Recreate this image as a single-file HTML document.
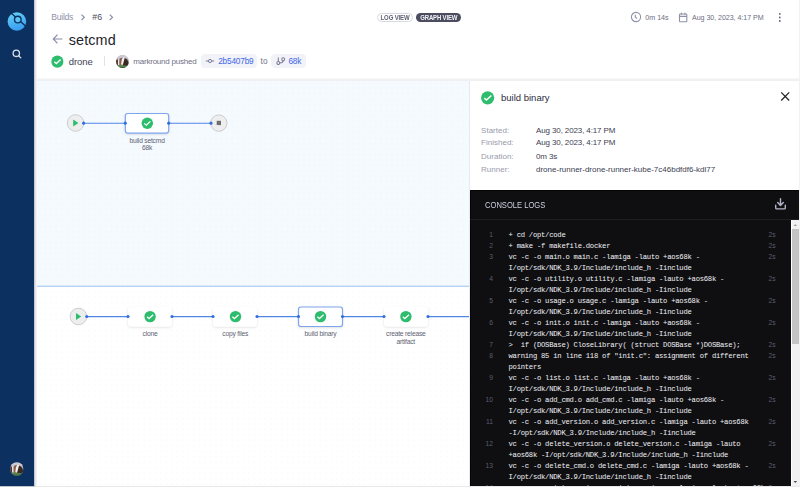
<!DOCTYPE html>
<html><head><meta charset="utf-8">
<style>
*{margin:0;padding:0;box-sizing:border-box}
html,body{width:800px;height:487px;overflow:hidden;background:#fff;font-family:"Liberation Sans",sans-serif}
.a{position:absolute}
.t{position:absolute;line-height:1;white-space:pre}
.m{font-family:"Liberation Mono",monospace}
.r{position:relative;white-space:pre}
.n{position:absolute;top:-0.8px;right:298px;font-size:6.7px;letter-spacing:0;color:#5b5e6b;font-family:"Liberation Sans",sans-serif}
.x{display:block;margin-left:38.5px}
.d{position:absolute;right:15.5px;top:-0.8px;font-size:6.7px;letter-spacing:0;color:#5b5e6b;font-family:"Liberation Sans",sans-serif}
</style></head><body>
<!-- right page strip -->
<div class="a" style="left:798.5px;top:0;width:2px;height:487px;background:#f2f2f2"></div>
<!-- sidebar -->
<div class="a" style="left:0;top:0;width:34px;height:487px;background:#0c305f"></div>
<div class="a" style="z-index:5;left:34px;top:0;width:3px;height:487px;background:linear-gradient(to right,#c6c9d0 0,#c6c9d0 1px,#e4e5e8 1px,#e4e5e8 2px,#f1f2f4 2px,#f1f2f4 3px)"></div>
<svg class="a" style="left:0;top:0" width="35" height="487" viewBox="0 0 35 487">
  <defs>
    <linearGradient id="lg" x1="0" y1="0" x2="0.3" y2="1">
      <stop offset="0" stop-color="#68d4f6"/><stop offset="1" stop-color="#3a9ff0"/>
    </linearGradient>
  </defs>
  <circle cx="16.9" cy="21.5" r="9.3" fill="url(#lg)"/>
  <line x1="10.5" y1="12.5" x2="25.5" y2="26" stroke="#0c305f" stroke-width="1.4"/>
  <circle cx="17.8" cy="19.6" r="3.3" fill="#5cc3f3" stroke="#0c305f" stroke-width="1.4"/>
  <circle cx="16.3" cy="53.3" r="3.2" fill="none" stroke="#dcdfe9" stroke-width="1.3"/>
  <line x1="18.6" y1="55.7" x2="20.8" y2="57.9" stroke="#dcdfe9" stroke-width="1.3" stroke-linecap="round"/>
  <defs><clipPath id="av1"><circle cx="6.5" cy="6.5" r="6.5"/></clipPath></defs>
  <g transform="translate(10.1 462.3) scale(1.03)"><g clip-path="url(#av1)"><use href="#avg"/></g></g>
</svg>

<!-- header -->
<div class="a" style="left:35px;top:78px;width:764px;height:1px;background:#f8f8fa"></div><div class="a" style="left:35px;top:79px;width:764px;height:2px;background:#f0f0f3"></div>
<div class="t" style="left:51.3px;top:12.7px;font-size:8.6px;letter-spacing:-0.28px;color:#9293aa">Builds</div>
<svg class="a" style="left:78px;top:13px" width="40" height="10" viewBox="0 0 40 10">
  <path d="M3.5 1.6 L6.3 4.3 L3.5 7.0" fill="none" stroke="#8a8ca4" stroke-width="1.15"/>
  <path d="M31.7 1.6 L34.5 4.3 L31.7 7.0" fill="none" stroke="#8a8ca4" stroke-width="1.15"/>
</svg>
<div class="t" style="left:92.3px;top:13.3px;font-size:8.8px;color:#4c4d61">#6</div>
<svg class="a" style="left:50.6px;top:32.2px" width="14" height="14" viewBox="0 0 14 14">
  <path d="M2.5 7 H11.4 M6.5 2.6 L2.3 7 L6.5 11.4" fill="none" stroke="#8a8ca8" stroke-width="1.15"/>
</svg>
<div class="t" style="left:68.8px;top:32.6px;font-size:14.4px;letter-spacing:0.1px;color:#1f1f2b">setcmd</div>

<svg class="a" style="left:50px;top:54px" width="15" height="15" viewBox="0 0 15 15">
  <circle cx="7.35" cy="7.65" r="6.05" fill="#2dbd6c"/>
  <path d="M4.3 7.65 L6.4 9.5 L10.6 5.5" fill="none" stroke="#fff" stroke-width="1.35"/>
</svg>
<div class="t" style="left:68.8px;top:57.4px;font-size:9.5px;letter-spacing:-0.1px;color:#3e3f54">drone</div>
<div class="a" style="left:104.2px;top:55.6px;width:1px;height:10.5px;background:#e2e2ea"></div>
<svg class="a" style="left:115.9px;top:54.8px" width="13" height="13" viewBox="0 0 13 13">
  <defs><clipPath id="av2"><circle cx="6.5" cy="6.5" r="6.5"/></clipPath>
  <g id="avg">
    <rect x="0" y="0" width="13" height="13" fill="#b7b2bc"/>
    <rect x="0" y="0" width="13" height="3.2" fill="#cdc9d2"/>
    <path d="M0 5 Q1 4 2 4.5 L2 10.5 L0 10.5Z" fill="#4e3428"/>
    <path d="M1.9 3.8 L3.5 4 L3.5 10 L1.9 10Z" fill="#e6e3e4"/>
    <path d="M3.4 4.2 Q4.8 2.6 6.8 2.4 L5.6 10.2 L3.4 10.2Z" fill="#8a5e4a"/>
    <path d="M6.8 2.3 Q8.3 2.4 8.8 3.2 L7 9.6 L5 9.6 Q5.3 5 6.8 2.3Z" fill="#f3f1f1"/>
    <path d="M8.7 3 Q11.6 3.8 12.6 7.2 L13 11 L6.6 11 L7 9.5Z" fill="#3a2a22"/>
    <path d="M0 10 L7 10.2 L13 11 L13 13 L0 13Z" fill="#55834a"/>
    <path d="M0 12 L13 12 L13 13 L0 13Z" fill="#3a5e31"/>
  </g></defs>
  <g clip-path="url(#av2)"><use href="#avg"/></g>
</svg>
<div class="t" style="left:133.3px;top:57.8px;font-size:8px;letter-spacing:-0.22px;color:#6f7085">markround pushed</div>

<div class="a" style="left:200.5px;top:54.2px;width:56.7px;height:14.1px;background:#f2f3f9;border-radius:4px"></div>
<svg class="a" style="left:204px;top:56px" width="12" height="10" viewBox="0 0 12 10">
  <circle cx="6" cy="5" r="1.6" fill="none" stroke="#7b7d95" stroke-width="1"/>
  <path d="M1.8 5 H4.4 M7.6 5 H10.2" stroke="#7b7d95" stroke-width="1"/>
</svg>
<div class="t" style="left:218.2px;top:57.2px;font-size:8.3px;letter-spacing:-0.2px;color:#3f66e4">2b5407b9</div>
<div class="t" style="left:260.6px;top:57.2px;font-size:8.3px;color:#727388">to</div>
<div class="a" style="left:271.2px;top:54.2px;width:34.4px;height:14.1px;background:#f2f3f9;border-radius:4px"></div>
<svg class="a" style="left:275px;top:55px" width="12" height="12" viewBox="0 0 12 12">
  <circle cx="3.3" cy="8" r="1.45" fill="none" stroke="#7b7d95" stroke-width="1.05"/>
  <circle cx="8.2" cy="4.25" r="1.45" fill="none" stroke="#7b7d95" stroke-width="1.05"/>
  <path d="M3.3 2.5 V6.5 M8.2 5.7 Q8.2 7.6 4.7 8" fill="none" stroke="#7b7d95" stroke-width="1.05"/>
</svg>
<div class="t" style="left:288.4px;top:57.2px;font-size:8.3px;letter-spacing:-0.2px;color:#3f66e4">68k</div>

<!-- toggle -->
<div class="a" style="left:376.9px;top:12.6px;width:36.5px;height:9.2px;border:0.8px solid #d9d9e1;border-radius:5px"></div>
<div class="t" style="left:380.6px;top:13.7px;font-size:6px;letter-spacing:-0.15px;font-weight:700;transform:scaleY(1.2);transform-origin:0 0;color:#5c5d70">LOG VIEW</div>
<div class="a" style="left:416px;top:12.6px;width:44.9px;height:9.2px;background:#4b4c60;border-radius:5px"></div>
<div class="t" style="left:420.2px;top:13.7px;font-size:6px;letter-spacing:-0.15px;font-weight:700;transform:scaleY(1.2);transform-origin:0 0;color:#f4f4f8">GRAPH VIEW</div>

<!-- right header -->
<svg class="a" style="left:629px;top:10px" width="14" height="14" viewBox="0 0 14 14">
  <circle cx="7" cy="7" r="4.6" fill="none" stroke="#8f91aa" stroke-width="1.1"/>
  <path d="M6.3 4.8 L6.3 6.9 L8 8.6" fill="none" stroke="#8f91aa" stroke-width="1.1"/>
</svg>
<div class="t" style="left:645.3px;top:14.1px;font-size:7.2px;letter-spacing:-0.05px;color:#6d6e82">0m 14s</div>
<svg class="a" style="left:677px;top:11px" width="12" height="13" viewBox="0 0 12 13">
  <rect x="2.5" y="3" width="7.3" height="7.8" rx="0.8" fill="none" stroke="#8f91aa" stroke-width="1.1"/>
  <path d="M2.5 5.4 H9.8 M4.4 1.8 V3.8 M7.9 1.8 V3.8" fill="none" stroke="#8f91aa" stroke-width="1.1"/>
</svg>
<div class="t" style="left:692px;top:14.6px;font-size:7.1px;letter-spacing:-0.05px;color:#6d6e82">Aug 30, 2023, 4:17 PM</div>
<svg class="a" style="left:776px;top:11px" width="8" height="13" viewBox="0 0 8 13">
  <circle cx="3.8" cy="2.9" r="0.95" fill="#66677b"/>
  <circle cx="3.8" cy="6.45" r="0.95" fill="#66677b"/>
  <circle cx="3.8" cy="10" r="0.95" fill="#66677b"/>
</svg>

<!-- graph area -->
<svg class="a" style="left:35px;top:81px" width="435" height="406" viewBox="35 81 435 406">
  <defs>
    <pattern id="dots" x="1.4" y="0.3" width="5.5" height="5.5" patternUnits="userSpaceOnUse">
      <circle cx="0" cy="0" r="0.45" fill="#e0e5ec"/>
      <circle cx="5.5" cy="0" r="0.45" fill="#e0e5ec"/>
      <circle cx="0" cy="5.5" r="0.45" fill="#e0e5ec"/>
      <circle cx="5.5" cy="5.5" r="0.45" fill="#e0e5ec"/>
    </pattern>
    <filter id="sh" x="-20%" y="-30%" width="140%" height="170%">
      <feDropShadow dx="0" dy="0.9" stdDeviation="1.3" flood-color="#000" flood-opacity="0.13"/>
    </filter>
    <g id="chk">
      <circle cx="0" cy="0" r="5.7" fill="#2dbd6c"/>
      <path d="M-3.1 0.15 L-1.05 1.95 L3.1 -1.85" fill="none" stroke="#fff" stroke-width="1.25"/>
    </g>
    <g id="play">
      <circle cx="0" cy="0" r="8.3" fill="#eeeeee" stroke="#cdcdcd" stroke-width="1"/>
      <path d="M-2.4 -3.4 L2.8 0 L-2.4 3.4Z" fill="#2dbd6c"/>
    </g>
  </defs>
  <rect x="35" y="81" width="435" height="205" fill="#f5faff"/>
  <rect x="35" y="81" width="435" height="205" fill="url(#dots)"/>
  <rect x="35" y="287" width="435" height="200" fill="#ffffff"/>
  <rect x="35" y="287" width="435" height="200" fill="url(#dots)"/>
  <rect x="35" y="285.6" width="435" height="1.4" fill="#b5d3f6"/>

  <!-- upper pipeline -->
  <use href="#play" x="75.6" y="123"/>
  <circle cx="218.8" cy="123.1" r="8.2" fill="#eeeeee" stroke="#cdcdcd" stroke-width="1"/>
  <rect x="216.7" y="120.8" width="4.3" height="4.3" fill="#6e6e6e"/>
  <path d="M84 123.2 H125.2 M168.7 123.2 H210.5" stroke="#4f86e6" stroke-width="1.1"/>
  <circle cx="83.6" cy="123.15" r="1.55" fill="#2f6fe0"/>
  <rect x="125.3" y="113.5" width="43.4" height="19.6" rx="2.5" fill="#fff" stroke="#7ea6ee" stroke-width="1.2" filter="url(#sh)"/>
  <circle cx="125.3" cy="123.15" r="1.55" fill="#2f6fe0"/>
  <circle cx="168.7" cy="123.15" r="1.55" fill="#2f6fe0"/>
  <circle cx="211" cy="123.15" r="1.55" fill="#2f6fe0"/>
  <use href="#chk" x="147.3" y="123.25"/>
  <text x="147.1" y="142.7" font-size="6.7" letter-spacing="-0.2" fill="#5e5f73" text-anchor="middle" font-family="Liberation Sans">build setcmd</text>
  <text x="147.1" y="150.4" font-size="6.7" letter-spacing="-0.2" fill="#5e5f73" text-anchor="middle" font-family="Liberation Sans">68k</text>

  <!-- lower pipeline -->
  <use href="#play" x="78.4" y="316.5"/>
  <path d="M86.8 316.6 H128 M172 316.6 H213 M257 316.6 H298.3 M342.7 316.6 H383.8 M428.2 316.6 H470" stroke="#4f86e6" stroke-width="1.1"/>
  <rect x="128" y="307" width="44" height="19.5" rx="3" fill="#fff" filter="url(#sh)"/>
  <rect x="213" y="307" width="44" height="19.5" rx="3" fill="#fff" filter="url(#sh)"/>
  <rect x="298.5" y="307" width="44" height="19.5" rx="2.5" fill="#fff" stroke="#7ea6ee" stroke-width="1.2" filter="url(#sh)"/>
  <rect x="384" y="307" width="44" height="19.5" rx="3" fill="#fff" filter="url(#sh)"/>
  <g fill="#2f6fe0">
    <circle cx="86.8" cy="316.55" r="1.55"/><circle cx="128" cy="316.55" r="1.55"/>
    <circle cx="172" cy="316.55" r="1.55"/><circle cx="213" cy="316.55" r="1.55"/>
    <circle cx="257" cy="316.55" r="1.55"/><circle cx="298.5" cy="316.55" r="1.55"/>
    <circle cx="342.5" cy="316.55" r="1.55"/><circle cx="384" cy="316.55" r="1.55"/>
    <circle cx="428" cy="316.55" r="1.55"/>
  </g>
  <use href="#chk" x="150.1" y="316.6"/>
  <use href="#chk" x="235.5" y="316.6"/>
  <use href="#chk" x="320.5" y="316.6"/>
  <use href="#chk" x="405.9" y="316.6"/>
  <g font-size="6.7" letter-spacing="-0.2" fill="#5e5f73" text-anchor="middle" font-family="Liberation Sans">
    <text x="150" y="336.4">clone</text>
    <text x="235.3" y="336.4">copy files</text>
    <text x="320.5" y="336.4">build binary</text>
    <text x="405.8" y="336.4">create release</text>
    <text x="405.8" y="343.6">artifact</text>
  </g>
</svg>

<!-- right panel -->
<div class="a" style="left:469.4px;top:81px;width:1px;height:406px;background:#e9e9f6"></div>
<div class="a" style="left:470px;top:81px;width:328.5px;height:109.5px;background:#fff"></div>
<svg class="a" style="left:480px;top:90px" width="16" height="16" viewBox="0 0 16 16">
  <circle cx="7.65" cy="7.85" r="6.6" fill="#2dbd6c"/>
  <path d="M4.3 8.1 L6.4 10 L11.4 5.5" fill="none" stroke="#fff" stroke-width="1.45"/>
</svg>
<div class="t" style="left:501px;top:92.5px;font-size:9.5px;color:#2c2d3d">build binary</div>
<svg class="a" style="left:779px;top:90px" width="12" height="12" viewBox="0 0 12 12">
  <path d="M2.2 2.3 L10.2 10.5 M10.2 2.3 L2.2 10.5" stroke="#222" stroke-width="1.2"/>
</svg>
<div class="t" style="left:481.1px;top:126.6px;font-size:8px;color:#989aad">Started:</div>
<div class="t" style="left:481.1px;top:139.4px;font-size:8px;color:#989aad">Finished:</div>
<div class="t" style="left:481.1px;top:152.8px;font-size:8px;color:#989aad">Duration:</div>
<div class="t" style="left:481.1px;top:165.8px;font-size:8px;color:#989aad">Runner:</div>
<div class="t" style="left:536px;top:126.6px;font-size:8px;letter-spacing:-0.12px;color:#3d3e51">Aug 30, 2023, 4:17 PM</div>
<div class="t" style="left:536px;top:139.4px;font-size:8px;letter-spacing:-0.12px;color:#3d3e51">Aug 30, 2023, 4:17 PM</div>
<div class="t" style="left:536px;top:152.8px;font-size:8px;letter-spacing:-0.12px;color:#3d3e51">0m 3s</div>
<div class="t" style="left:536px;top:165.8px;font-size:8px;letter-spacing:0px;color:#3d3e51">drone-runner-drone-runner-kube-7c46bdfdf6-kdl77</div>

<!-- console -->
<div class="a" style="left:470px;top:190.3px;width:328.5px;height:297px;background:#0f0f12;border-top:1px solid #050506;border-left:1px solid #050506"></div>
<div class="a" style="left:470px;top:218.8px;width:328.5px;height:1px;background:#1d1d22"></div>
<div class="t" style="left:485px;top:201.0px;font-size:7.6px;transform:scaleY(1.18);transform-origin:0 0;color:#cdd0e0">CONSOLE LOGS</div>
<svg class="a" style="left:772px;top:196px" width="16" height="16" viewBox="0 0 16 16">
  <path d="M8.5 2.6 V9.3 M5.7 6.6 L8.5 9.4 L11.3 6.6" fill="none" stroke="#b3b5c6" stroke-width="1.4" stroke-linecap="round" stroke-linejoin="round"/>
  <path d="M3.7 9.3 V11.9 Q3.7 12.9 4.7 12.9 H12.3 Q13.3 12.9 13.3 11.9 V9.3" fill="none" stroke="#b3b5c6" stroke-width="1.4" stroke-linecap="round"/>
</svg>

<div id="logs" class="a m" style="left:470px;top:219.3px;width:321px;height:268px;overflow:hidden;font-size:7.2px;letter-spacing:-0.245px;line-height:11px;color:#f2f2f6;padding-top:10.9px">
<div class="r"><span class="n">1</span><span class="x">+ cd /opt/code</span><span class="d">2s</span></div>
<div class="r"><span class="n">2</span><span class="x">+ make -f makefile.docker</span><span class="d">2s</span></div>
<div class="r"><span class="n">3</span><span class="x">vc -c -o main.o main.c -lamiga -lauto +aos68k -<br>I/opt/sdk/NDK_3.9/Include/include_h -Iinclude</span><span class="d">2s</span></div>
<div class="r"><span class="n">4</span><span class="x">vc -c -o utility.o utility.c -lamiga -lauto +aos68k -<br>I/opt/sdk/NDK_3.9/Include/include_h -Iinclude</span><span class="d">2s</span></div>
<div class="r"><span class="n">5</span><span class="x">vc -c -o usage.o usage.c -lamiga -lauto +aos68k -<br>I/opt/sdk/NDK_3.9/Include/include_h -Iinclude</span><span class="d">2s</span></div>
<div class="r"><span class="n">6</span><span class="x">vc -c -o init.o init.c -lamiga -lauto +aos68k -<br>I/opt/sdk/NDK_3.9/Include/include_h -Iinclude</span><span class="d">2s</span></div>
<div class="r"><span class="n">7</span><span class="x">&gt;  if (DOSBase) CloseLibrary( (struct DOSBase *)DOSBase);</span><span class="d">2s</span></div>
<div class="r"><span class="n">8</span><span class="x">warning 85 in line 118 of &quot;init.c&quot;: assignment of different<br>pointers</span><span class="d">2s</span></div>
<div class="r"><span class="n">9</span><span class="x">vc -c -o list.o list.c -lamiga -lauto +aos68k -<br>I/opt/sdk/NDK_3.9/Include/include_h -Iinclude</span><span class="d">2s</span></div>
<div class="r"><span class="n">10</span><span class="x">vc -c -o add_cmd.o add_cmd.c -lamiga -lauto +aos68k -<br>I/opt/sdk/NDK_3.9/Include/include_h -Iinclude</span><span class="d">2s</span></div>
<div class="r"><span class="n">11</span><span class="x">vc -c -o add_version.o add_version.c -lamiga -lauto +aos68k<br>-I/opt/sdk/NDK_3.9/Include/include_h -Iinclude</span><span class="d">2s</span></div>
<div class="r"><span class="n">12</span><span class="x">vc -c -o delete_version.o delete_version.c -lamiga -lauto<br>+aos68k -I/opt/sdk/NDK_3.9/Include/include_h -Iinclude</span><span class="d">2s</span></div>
<div class="r"><span class="n">13</span><span class="x">vc -c -o delete_cmd.o delete_cmd.c -lamiga -lauto +aos68k -<br>I/opt/sdk/NDK_3.9/Include/include_h -Iinclude</span><span class="d">2s</span></div>
<div class="r"><span class="n">14</span><span class="x">vc -c -o print_version.o print_version.c -lamiga -lauto +aos68k<br>-I/opt/sdk/NDK_3.9/Include/include_h -Iinclude</span><span class="d">2s</span></div>
</div>

<!-- scrollbar -->
<div class="a" style="left:790.8px;top:220px;width:1.2px;height:267px;background:#fff"></div>
<div class="a" style="left:792px;top:220px;width:6.6px;height:267px;background:#f1f1f1"></div>
<div class="a" style="left:792px;top:229.1px;width:6.5px;height:114.9px;background:#c4c4c4"></div>
<svg class="a" style="left:790px;top:220px" width="10" height="267" viewBox="0 0 10 267">
  <path d="M3.5 6.1 L5.3 4.1 L7.1 6.1Z" fill="#a3a3a3"/>
  <path d="M3.5 261 L5.35 263.1 L7.2 261Z" fill="#505050"/>
</svg>
<div class="a" style="left:0;top:485.5px;width:800px;height:1.5px;background:#e9e9e9"></div><div class="a" style="left:0;top:485.5px;width:34px;height:1.5px;background:#bfc3cb"></div>
</body></html>
